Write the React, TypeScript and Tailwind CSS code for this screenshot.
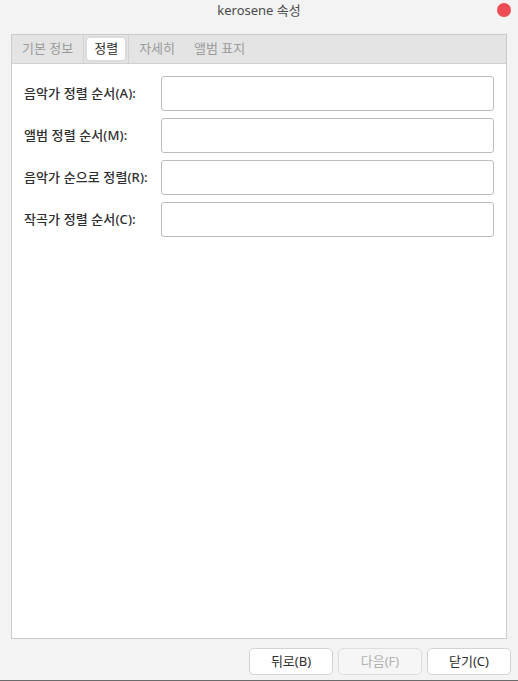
import React from "react";

const font = { fontFamily: '"Noto Sans", "Noto Sans CJK KR", sans-serif' };

const fields = [
  "음악가 정렬 순서(A):",
  "앨범 정렬 순서(M):",
  "음악가 순으로 정렬(R):",
  "작곡가 정렬 순서(C):",
];

export default function App() {
  return (
    <div className="w-[518px] h-[681px] bg-[#f3f3f3] flex flex-col text-[13px] overflow-hidden" style={font}>
      {/* title bar */}
      <div className="relative h-[34px] flex justify-center pt-[1px] text-[#4a4a4a] leading-[18px]">
        <span>kerosene 속성</span>
        <div className="absolute right-[7px] top-[3px] w-[14px] h-[14px] rounded-full bg-[#ef4b55]" />
      </div>

      {/* notebook */}
      <div className="mx-[11px] flex-1 flex flex-col border border-[#cbcbcb] bg-white">
        <div className="h-[29px] flex items-stretch bg-[#e4e4e4] border-b border-[#d0d0d0] text-[#9b9b9b]">
          <div className="px-[10px] flex items-center border-r border-[#d2d2d2]">기본 정보</div>
          <div className="flex items-center px-[1px]">
            <div className="h-[26px] px-[7px] flex items-center bg-white border-2 border-[#dcdcdc] rounded-[5px] text-[#2b2b2b]">정렬</div>
          </div>
          <div className="px-[10px] flex items-center border-l border-[#d2d2d2]">자세히</div>
          <div className="px-[9px] flex items-center">앨범 표지</div>
        </div>

        <div className="flex-1 pt-[12px] pl-[12px] pr-[12px] flex flex-col gap-[7px]">
          {fields.map((f) => (
            <div key={f} className="flex items-center">
              <label className="w-[137px] font-medium text-[#2e2e2e] tracking-[0.1px]">{f}</label>
              <div className="flex-1 h-[35px] border border-[#bdbdbd] rounded-[3px] bg-white" />
            </div>
          ))}
        </div>
      </div>

      {/* buttons */}
      <div className="h-[42px] flex justify-end items-start pt-[9px] pr-[7px] gap-[5px] border-b border-[#6b6b6b]">
        <button className="w-[84px] h-[27px] rounded-[5px] border border-[#d3d3d3] bg-white text-[#2e2e2e]">뒤로(B)</button>
        <button className="w-[84px] h-[27px] rounded-[5px] border border-[#dedede] bg-[#f6f6f6] text-[#b0b0b0]">다음(F)</button>
        <button className="w-[84px] h-[27px] rounded-[5px] border border-[#d3d3d3] bg-white text-[#2e2e2e]">닫기(C)</button>
      </div>
    </div>
  );
}
